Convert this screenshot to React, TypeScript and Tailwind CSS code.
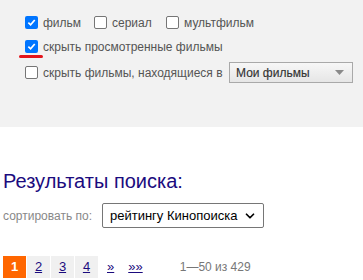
import { ChevronDown } from "lucide-react";

function Check({ checked }: { checked?: boolean }) {
  if (checked) {
    return (
      <span className="flex h-[13px] w-[13px] shrink-0 items-center justify-center rounded-[2px] bg-[#0075ff]">
        <svg width="9" height="9" viewBox="0 0 10 10">
          <path d="M1.5 5.2 L4 7.6 L8.6 2.2" fill="none" stroke="white" strokeWidth="1.9" />
        </svg>
      </span>
    );
  }
  return <span className="h-[13px] w-[13px] shrink-0 rounded-[2px] border border-[#767676] bg-white" />;
}

function Option({ label, checked }: { label: string; checked?: boolean }) {
  return (
    <label className="flex items-center gap-[5px] whitespace-nowrap">
      <Check checked={checked} />
      <span>{label}</span>
    </label>
  );
}

const pages = ["2", "3", "4"];

export default function App() {
  return (
    <div className="h-[280px] w-[363px] overflow-hidden bg-white font-['Liberation_Sans',sans-serif] text-[12px] text-[#555]">
      <div className="h-[127px] bg-[#f2f2f2] pl-[25px] pt-[14px]">
        <div className="flex h-[17px] items-center">
          <div className="w-[69px]"><Option label="фильм" checked /></div>
          <div className="w-[72px]"><Option label="сериал" /></div>
          <Option label="мультфильм" />
        </div>
        <div className="relative mt-[7px] flex h-[17px] items-center">
          <Option label="скрыть просмотренные фильмы" checked />
          <span className="absolute left-[-6px] top-[17px] h-[3px] w-[24px] rounded-full bg-[#e3141b]" />
        </div>
        <div className="mt-[7px] flex items-center">
          <div className="w-[204px]"><Option label="скрыть фильмы, находящиеся в" /></div>
          <div className="flex h-[21px] w-[124px] items-center justify-between border border-[#a9a9a9] bg-gradient-to-b from-[#f7f7f7] to-[#e6e6e6] pl-[6px] pr-[8px] text-[12px] text-[#333] [-webkit-text-stroke:0.15px_#333]">
            <span>Мои фильмы</span>
            <svg width="9" height="5" viewBox="0 0 9 5">
              <path d="M0 0 H9 L4.5 5 Z" fill="#8a8a8a" />
            </svg>
          </div>
        </div>
      </div>

      <h1 className="ml-[3px] mt-[41px] text-[20px] leading-[26px] text-[#1b0b7e]">Результаты поиска:</h1>

      <div className="ml-[3px] mt-[9px] flex items-center">
        <span className="w-[99px] text-[#888]">сортировать по:</span>
        <div className="flex h-[25px] w-[162px] items-center justify-between rounded-[2px] border border-[#767676] bg-white pl-[7px] pr-[6px] text-[13px] text-black">
          <span>рейтингу Кинопоиска</span>
          <ChevronDown size={14} strokeWidth={3} />
        </div>
      </div>

      <div className="ml-[3px] mt-[28px] flex h-[22px] items-center text-[13px]">
        <span className="flex h-[22px] w-[23px] items-center justify-center bg-[#ff6600] font-bold text-white">1</span>
        {pages.map((p) => (
          <a key={p} className="ml-[1px] flex h-[22px] w-[23px] items-center justify-center bg-[#f0f0f0] text-[#1b0b7e] underline">
            {p}
          </a>
        ))}
        <a className="ml-[9px] text-[#1b0b7e] underline">»</a>
        <a className="ml-[14px] text-[#1b0b7e] underline">»»</a>
        <span className="ml-[37px] text-[12px] text-[#777]">1—50 из 429</span>
      </div>
    </div>
  );
}
